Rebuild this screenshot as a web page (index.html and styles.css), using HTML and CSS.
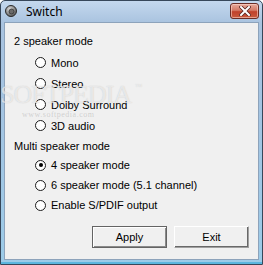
FILE: index.html
```html
<!DOCTYPE html>
<html lang="en">
<head>
    <meta charset="UTF-8">
    <title>Switch</title>
    <link rel="stylesheet" href="styles.css">
</head>
<body>

    <div class="window">
        <div class="titlebar">
            <svg class="app-icon" width="12" height="12" viewBox="0 0 12 12">
                <defs>
                    <radialGradient id="spk" cx="40%" cy="35%" r="70%">
                        <stop offset="0" stop-color="#e4e4e4"/>
                        <stop offset="1" stop-color="#4c4c4c"/>
                    </radialGradient>
                </defs>
                <circle cx="6" cy="6" r="5.5" fill="url(#spk)" stroke="#2b2b2b" stroke-width="1"/>
                <circle cx="6.5" cy="6.5" r="2.5" fill="#6a6a6a" stroke="#333" stroke-width=".8"/>
            </svg>
            <span class="title">Switch</span>
            <div class="close-btn">
                <svg width="12" height="10" viewBox="0 0 12 10">
                    <path d="M2 1 L10 9 M10 1 L2 9" stroke="#5a2620" stroke-width="3.6" stroke-linecap="square"/>
                    <path d="M2 1 L10 9 M10 1 L2 9" stroke="#fff" stroke-width="2" stroke-linecap="square"/>
                </svg>
            </div>
        </div>

        <div class="client">
            <div class="group-label first">2 speaker mode</div>
            <div class="options wide">
                <div class="option"><span class="radio"></span>Mono</div>
                <div class="option"><span class="radio"></span>Stereo</div>
                <div class="option"><span class="radio"></span>Dolby Surround</div>
                <div class="option"><span class="radio"></span>3D audio</div>
            </div>

            <div class="group-label">Multi speaker mode</div>
            <div class="options">
                <div class="option"><span class="radio checked"></span>4 speaker mode</div>
                <div class="option"><span class="radio"></span>6 speaker mode (5.1 channel)</div>
                <div class="option"><span class="radio"></span>Enable S/PDIF output</div>
            </div>

            <div class="buttons">
                <button class="btn default">Apply</button>
                <button class="btn">Exit</button>
            </div>

            <div class="watermark">
                <span class="wm-big">SOFTPEDIA<sup>™</sup></span>
                <span class="wm-small">www.softpedia.com</span>
            </div>
        </div>
    </div>

</body>
</html>
```

FILE: styles.css
```css
html, body {
    margin: 0;
    padding: 0;
    background: #ffffff;
}

.window {
    width: 263px;
    height: 265px;
    box-sizing: border-box;
    border: 1px solid #37475a;
    border-radius: 5px 5px 0 0;
    background: linear-gradient(#c4d8ee, #a9c3df 22px, #a4c4e2 40%, #9ccbe8);
    padding: 0 3px 4px;
    display: flex;
    flex-direction: column;
    box-shadow: inset 0 -2px 0 #5bb6de;
}

.titlebar {
    height: 21px;
    display: flex;
    align-items: center;
    flex-shrink: 0;
}

.app-icon {
    margin-left: 1px;
    margin-top: -2px;
}

.title {
    margin-left: 9px;
    font-family: "Noto Sans", "DejaVu Sans", sans-serif;
    font-size: 12px;
    color: #000;
    flex: 1;
    margin-top: -1px;
}

.close-btn {
    width: 27px;
    height: 14px;
    margin-top: -1px;
    border: 1px solid #6b2d26;
    border-radius: 3px;
    background: linear-gradient(#e8a99b, #d47a66 45%, #c0412b 55%, #c95a3e);
    box-shadow: inset 0 0 0 1px rgba(255, 220, 210, .55);
    display: flex;
    align-items: center;
    justify-content: center;
}

.client {
    flex: 1;
    position: relative;
    background: #f0f0f0;
    border: 1px solid #8da3bb;
    font-family: "Liberation Sans", Arial, sans-serif;
    font-size: 11px;
    color: #000;
    padding-left: 9px;
}

.group-label {
    height: 18px;
    line-height: 18px;
}

.group-label.first {
    height: 20px;
    line-height: 20px;
    margin-top: 8px;
    margin-bottom: 1px;
}

.options {
    padding-left: 21px;
    margin-bottom: 1px;
}

.option {
    height: 20px;
    display: flex;
    align-items: center;
}

.options.wide .option {
    height: 21px;
}

.radio {
    width: 9px;
    height: 9px;
    border: 1.5px solid #1c1c1c;
    border-radius: 50%;
    background: #fff;
    margin-right: 5px;
    flex-shrink: 0;
    display: flex;
    align-items: center;
    justify-content: center;
}

.radio.checked::after {
    content: "";
    width: 4px;
    height: 4px;
    border-radius: 50%;
    background: #000;
}

.buttons {
    display: flex;
    gap: 7px;
    margin-top: 11px;
    padding-left: 78px;
}

.btn {
    width: 75px;
    height: 22px;
    font-family: "Liberation Sans", Arial, sans-serif;
    font-size: 11px;
    color: #000;
    background: #f0f0f0;
    border: 1px solid;
    border-color: #fff #a0a0a0 #a0a0a0 #fff;
    box-shadow: inset -1px -1px 0 #696969;
    padding: 0;
}

.btn.default {
    border: 1px solid #646464;
    box-shadow: inset 1px 1px 0 #fff, inset -1px -1px 0 #8a8a8a;
}

.watermark {
    position: absolute;
    left: -5px;
    top: 49px;
    display: flex;
    flex-direction: column;
    pointer-events: none;
    font-family: "Liberation Serif", serif;
}

.wm-big {
    font-size: 26px;
    line-height: 30px;
    letter-spacing: -1px;
    color: rgba(255, 255, 255, .6);
    text-shadow: 0 0 1px rgba(110, 110, 110, .35);
}

.wm-big sup {
    font-size: 7px;
    margin-left: 4px;
    vertical-align: 14px;
}

.wm-small {
    font-size: 8px;
    line-height: 8px;
    margin-top: 1px;
    margin-left: 22px;
    letter-spacing: .5px;
    color: rgba(140, 140, 140, .35);
}
```
